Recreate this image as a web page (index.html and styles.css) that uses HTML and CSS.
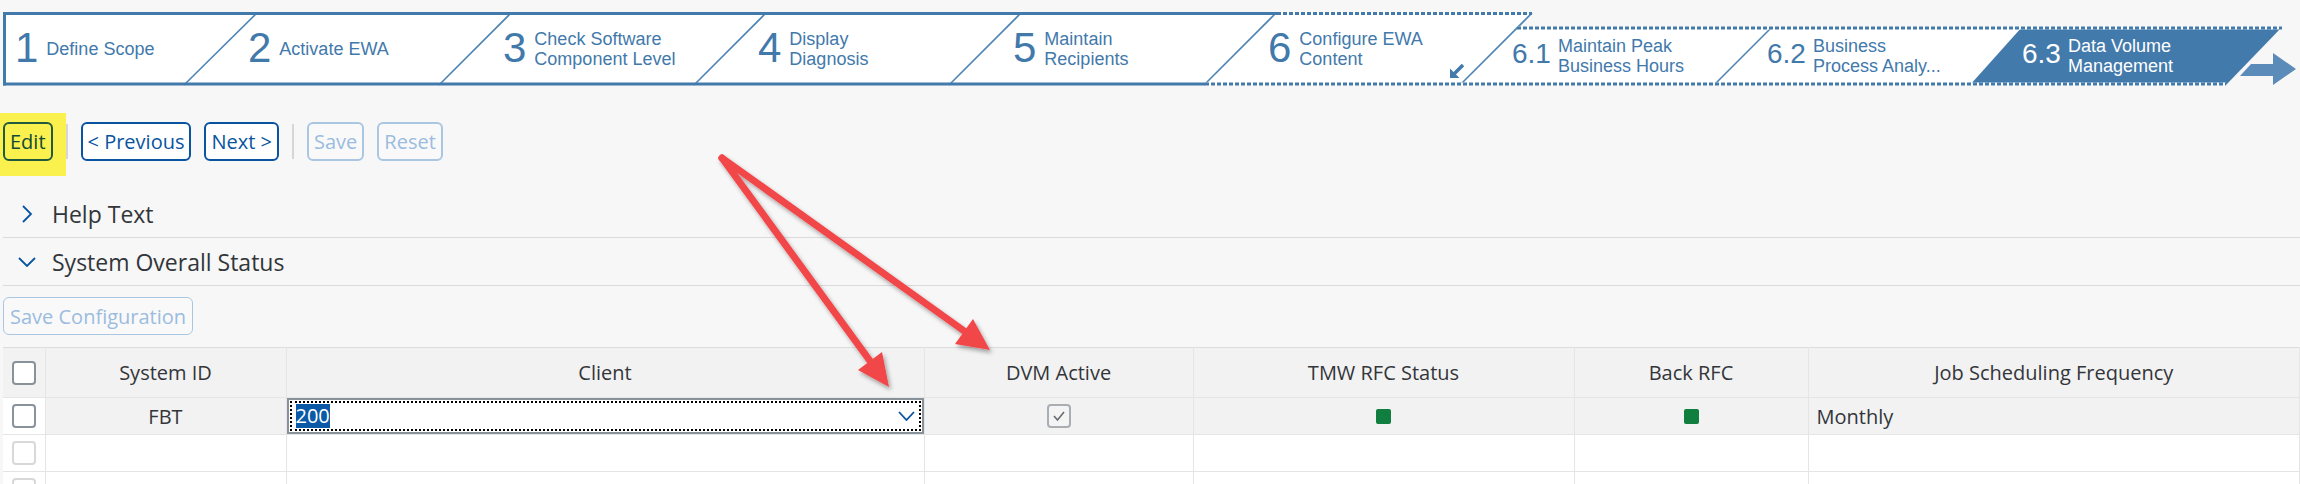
FILE: index.html
```html
<!DOCTYPE html>
<html>
<head>
	<title>Configure EWA - Data Volume Management</title>
	<link rel="stylesheet" href="styles.css">
</head>
<body>
	<!-- roadmap -->
	<div class="roadmap">
		<svg class="roadmap-bg" width="2300" height="90" viewBox="0 0 2300 90">
			<polygon points="3,12 1532,12 1517,27 2282,27 2226,85 3,85" fill="#fff"/>
			<polygon points="2022,27 2282,27 2226,85 1970,85" fill="#437aac"/>

			<g stroke="#4f84b4" stroke-width="1.6">
				<line x1="257" y1="13" x2="184" y2="85"/>
				<line x1="511" y1="13" x2="439" y2="85"/>
				<line x1="766" y1="13" x2="694" y2="85"/>
				<line x1="1021" y1="13" x2="949" y2="85"/>
				<line x1="1276" y1="13" x2="1204" y2="85"/>
				<line x1="1532" y1="13" x2="1460" y2="85"/>
				<line x1="1771" y1="28" x2="1714" y2="85"/>
			</g>

			<g stroke="#437aac" stroke-width="3">
				<line x1="4.5" y1="12" x2="4.5" y2="85.5"/>
				<line x1="3" y1="13.5" x2="1277" y2="13.5"/>
				<line x1="3" y1="84" x2="1205" y2="84"/>
			</g>

			<!-- dashed parts (step 6 and its sub steps) -->
			<g stroke="#fff" stroke-width="3">
				<line x1="1277" y1="13.5" x2="1532" y2="13.5"/>
				<line x1="1517" y1="28" x2="2282" y2="28"/>
				<line x1="1205" y1="84" x2="2226" y2="84"/>
			</g>
			<g stroke="#437aac" stroke-width="3" stroke-dasharray="4 2">
				<line x1="1277" y1="13.5" x2="1532" y2="13.5"/>
				<line x1="1517" y1="28" x2="2282" y2="28"/>
				<line x1="1205" y1="84" x2="2226" y2="84"/>
			</g>

			<!-- collapse icon of step 6 -->
			<polygon points="1450,78 1450,68.5 1459.5,78" fill="#437aac"/>
			<line x1="1453" y1="75" x2="1463" y2="65" stroke="#437aac" stroke-width="3.5"/>

			<!-- scroll arrow -->
			<polygon points="2240,76 2251,64 2273,64 2273,53 2296,69 2273,85 2273,76" fill="#5a8bb9"/>
		</svg>

		<ul class="steps">
			<li class="step first"><span class="num">1</span><span class="label">Define Scope</span></li>
			<li class="step"><span class="num">2</span><span class="label">Activate EWA</span></li>
			<li class="step"><span class="num">3</span><span class="label">Check Software<br>Component Level</span></li>
			<li class="step"><span class="num">4</span><span class="label">Display<br>Diagnosis</span></li>
			<li class="step"><span class="num">5</span><span class="label">Maintain<br>Recipients</span></li>
			<li class="step wide"><span class="num">6</span><span class="label">Configure EWA<br>Content</span></li>
			<li class="step sub"><span class="num">6.1</span><span class="label">Maintain Peak<br>Business Hours</span></li>
			<li class="step sub"><span class="num">6.2</span><span class="label">Business<br>Process Analy...</span></li>
			<li class="step sub current"><span class="num">6.3</span><span class="label">Data Volume<br>Management</span></li>
		</ul>
	</div>

	<!-- toolbar -->
	<div class="toolbar">
		<span class="mark"><button class="btn">Edit</button></span>
		<span class="sep"></span>
		<button class="btn">&lt; Previous</button>
		<button class="btn">Next &gt;</button>
		<span class="sep"></span>
		<button class="btn" disabled>Save</button>
		<button class="btn" disabled>Reset</button>
	</div>

	<!-- panels -->
	<div class="panel-head first">
		<span class="chev">
			<svg width="12" height="18" viewBox="0 0 12 18"><polyline points="2,1 10,9 2,17" fill="none" stroke="#0854a0" stroke-width="1.8"/></svg>
		</span>
		<span class="panel-title">Help Text</span>
	</div>
	<div class="panel-head">
		<span class="chev">
			<svg width="18" height="10" viewBox="0 0 18 10"><polyline points="1,1 9,9 17,1" fill="none" stroke="#0854a0" stroke-width="1.8"/></svg>
		</span>
		<span class="panel-title">System Overall Status</span>
	</div>

	<button class="btn save-config" disabled>Save Configuration</button>

	<table class="grid">
		<colgroup>
			<col class="col-sel">
			<col class="col-sys">
			<col class="col-client">
			<col class="col-dvm">
			<col class="col-tmw">
			<col class="col-back">
			<col>
		</colgroup>
		<thead>
			<tr>
				<th><span class="cb"></span></th>
				<th>System ID</th>
				<th>Client</th>
				<th>DVM Active</th>
				<th>TMW RFC Status</th>
				<th>Back RFC</th>
				<th>Job Scheduling Frequency</th>
			</tr>
		</thead>
		<tbody>
			<tr class="ro">
				<td class="sel"><span class="cb"></span></td>
				<td class="c">FBT</td>
				<td class="client">
					<div class="combo">
						<span class="val">200</span>
						<svg width="17" height="10" viewBox="0 0 17 10"><polyline points="1,1 8.5,9 16,1" fill="none" stroke="#0854a0" stroke-width="1.8"/></svg>
					</div>
				</td>
				<td class="c">
					<span class="cb checked">
						<svg width="14" height="12" viewBox="0 0 14 12"><polyline points="2,6 5.5,10 12,2" fill="none" stroke="#6a6d70" stroke-width="1.6"/></svg>
					</span>
				</td>
				<td class="c"><span class="led"></span></td>
				<td class="c"><span class="led"></span></td>
				<td>Monthly</td>
			</tr>
			<tr>
				<td class="sel"><span class="cb off"></span></td>
				<td></td><td></td><td></td><td></td><td></td><td></td>
			</tr>
			<tr>
				<td class="sel"><span class="cb off"></span></td>
				<td></td><td></td><td></td><td></td><td></td><td></td>
			</tr>
		</tbody>
	</table>

	<!-- annotation arrows -->
	<svg class="annot" width="2300" height="484" viewBox="0 0 2300 484">
		<defs>
			<filter id="shadow" x="-20%" y="-20%" width="140%" height="140%">
				<feDropShadow dx="2" dy="3" stdDeviation="2" flood-color="#000" flood-opacity="0.35"/>
			</filter>
		</defs>
		<g filter="url(#shadow)" fill="#f2474a" stroke="#f2474a">
			<line x1="722" y1="158" x2="873" y2="365" stroke-width="7" stroke-linecap="round"/>
			<polygon points="858,370 882,352 889,387" stroke="none"/>
			<line x1="722" y1="158" x2="967" y2="333" stroke-width="7" stroke-linecap="round"/>
			<polygon points="955,344 973,319 990,350" stroke="none"/>
		</g>
	</svg>
</body>
</html>
```

FILE: styles.css
```css
* {
	margin: 0;
	padding: 0;
	box-sizing: border-box;
}
ul {
	list-style: none;
}

body {
	width: 2300px;
	height: 484px;
	overflow: hidden;
	position: relative;
	background-color: #f7f7f7;
	font-family: "Open Sans", sans-serif;
	color: #32363a;
}

/* roadmap */
.roadmap {
	position: relative;
	height: 86px;
}

.roadmap-bg {
	position: absolute;
	left: 0;
	top: 0;
}

.steps {
	position: relative;
	display: flex;
	padding: 12px 0 0 15px;
	font-family: "Liberation Sans", Arial, sans-serif;
	color: #4279ab;
}

.step {
	flex: none;
	display: flex;
	align-items: center;
	gap: 8px;
	width: 255px;
	height: 73px;
}

.step.first {
	width: 233px;
}

.step.wide {
	width: 244px;
}

.step.sub {
	height: 58px;
	margin-top: 15px;
	gap: 7px;
}

.step.current {
	color: #fff;
}

.num {
	font-size: 42px;
	line-height: 42px;
	margin-bottom: 2px;
}

.sub .num {
	font-size: 28px;
	line-height: 28px;
	margin-bottom: 5px;
}

.label {
	font-size: 18px;
	line-height: 20px;
	white-space: nowrap;
}

/* toolbar */
.toolbar {
	display: flex;
	align-items: center;
	gap: 13px;
	height: 39px;
	margin: 36px 0 0 3px;
}

.btn {
	font-family: "Open Sans", sans-serif;
	font-size: 20px;
	height: 39px;
	padding: 0 5px;
	border: 2px solid #0854a0;
	border-radius: 6px;
	background-color: #fff;
	color: #0854a0;
}

.btn:disabled {
	border-color: #a9c6e3;
	color: #9bbcde;
	background-color: #f9f9fa;
}

.mark {
	position: relative;
	z-index: 0;
	display: flex;
}

.mark::before {
	content: "";
	position: absolute;
	top: -9px;
	right: -13px;
	bottom: -15px;
	left: -3px;
	background-color: #faf14f;
	z-index: -1;
}

.mark .btn {
	background-color: #faf14f;
	border-color: #1f5a3d;
	color: #114a36;
}

.sep {
	width: 2px;
	height: 35px;
	background-color: #d6d6d6;
}

/* panels */
.panel-head {
	display: flex;
	align-items: center;
	height: 48px;
	margin-left: 3px;
	padding-left: 14px;
	border-bottom: 1px solid #dadada;
}

.panel-head.first {
	margin-top: 29px;
}

.chev {
	display: flex;
	justify-content: center;
	align-items: center;
	width: 20px;
	margin-right: 15px;
}

.panel-title {
	font-size: 23px;
	color: #32363a;
}

.save-config {
	display: block;
	height: 38px;
	margin: 11px 0 0 3px;
	padding: 0 6px;
	border-width: 1.5px;
}

/* table */
.grid {
	width: 2297px;
	margin: 12px 0 0 3px;
	border-collapse: collapse;
	table-layout: fixed;
	font-size: 20px;
	color: #32363a;
}

.col-sel { width: 42px; }
.col-sys { width: 241px; }
.col-client { width: 638px; }
.col-dvm { width: 269px; }
.col-tmw { width: 381px; }
.col-back { width: 234px; }

.grid th {
	height: 50px;
	font-weight: normal;
	background-color: #f2f2f2;
	border-top: 1px solid #dcdcdc;
	border-right: 1px solid #e5e5e5;
	border-bottom: 1px solid #e5e5e5;
}

.grid td {
	height: 37px;
	padding: 0 8px;
	background-color: #fff;
	border-right: 1px solid #e5e5e5;
	border-bottom: 1px solid #e5e5e5;
}

.grid .ro td {
	background-color: #f2f2f2;
}

.grid .ro td.sel {
	background-color: #fff;
}

.grid .c {
	text-align: center;
}

.grid td.sel {
	padding: 0;
}

.cb {
	display: flex;
	justify-content: center;
	align-items: center;
	width: 24px;
	height: 24px;
	margin: 0 auto;
	border: 2px solid #89919a;
	border-radius: 4px;
	background-color: #fff;
}

.cb.off {
	border-color: #d6d8da;
}

.cb.checked {
	border-color: #a9aeb3;
	background-color: #f4f4f4;
}

.led {
	display: block;
	width: 15px;
	height: 15px;
	margin: 0 auto;
	border-radius: 2px;
	background-color: #107e3e;
}

.grid td.client {
	padding: 0;
}

.combo {
	display: flex;
	align-items: center;
	justify-content: space-between;
	height: 36px;
	padding: 0 7px;
	border: 2px solid #8a9299;
	background-color: #fff;
	outline: 2px dotted #000;
	outline-offset: -5px;
}

.combo .val {
	line-height: 24px;
	background-color: #0a5aa7;
	color: #fff;
}

/* annotation */
.annot {
	position: absolute;
	left: 0;
	top: 0;
	z-index: 10;
	pointer-events: none;
}
```
